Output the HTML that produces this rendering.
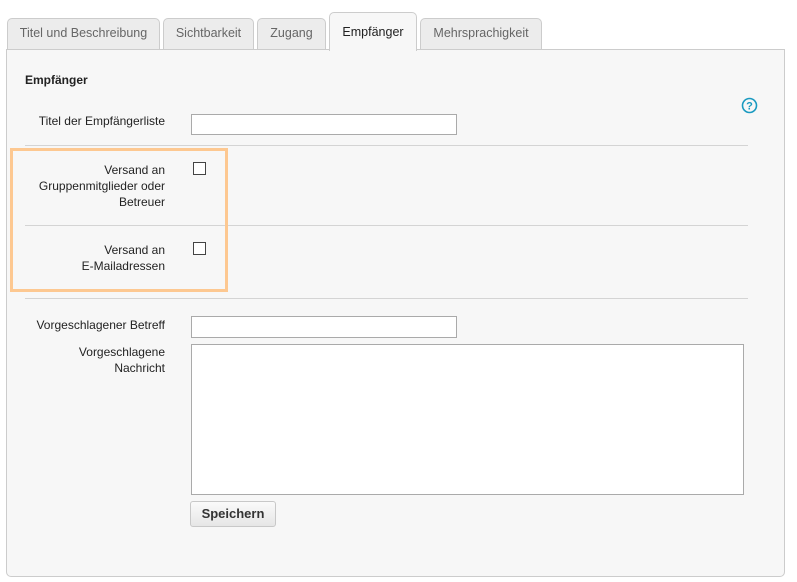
<!DOCTYPE html>
<html><head><meta charset="utf-8"><style>
body{margin:0;width:797px;height:582px;background:#fff;font-family:"Liberation Sans",Arial,sans-serif;font-size:12px;color:#222;position:relative;overflow:hidden}
.a{position:absolute}
.tab{position:absolute;top:18px;height:31px;background:#ececec;border:1px solid #ccc;border-bottom:none;border-radius:5px 5px 0 0;color:#666;font-size:12.5px;text-align:center;line-height:28px;box-sizing:border-box}
.panel{position:absolute;left:6px;top:49px;width:779px;height:528px;background:#f7f7f7;border:1px solid #ccc;border-radius:0 0 5px 5px;box-sizing:border-box}
.lbl{position:absolute;text-align:right;width:160px;left:5px;line-height:16px}
.hr{position:absolute;left:25px;width:723px;height:1px;background:#d4d4d4}
.in{position:absolute;background:#fff;border:1px solid #aaa;box-sizing:border-box}
.cb{position:absolute;width:13px;height:13px;border:1px solid #444;background:#fff;box-sizing:border-box}
</style></head><body>
<div class="tab" style="left:7px;width:153px">Titel und Beschreibung</div>
<div class="tab" style="left:163px;width:91px">Sichtbarkeit</div>
<div class="tab" style="left:257px;width:69px">Zugang</div>
<div class="tab" style="left:420px;width:122px">Mehrsprachigkeit</div>
<div class="panel"></div>
<div class="tab" style="left:329px;top:12px;width:88px;height:39px;background:#f7f7f7;color:#222;line-height:38px;z-index:2">Empfänger</div>
<div class="a" style="left:25px;top:73px;font-weight:bold">Empfänger</div>
<svg class="a" style="left:741px;top:97px" width="17" height="17" viewBox="0 0 17 17"><circle cx="8.5" cy="8.5" r="7" fill="none" stroke="#1a9ac0" stroke-width="1.6"/><text x="8.5" y="12.5" text-anchor="middle" font-family="Liberation Sans" font-weight="bold" font-size="11" fill="#1a9ac0">?</text></svg>
<div class="lbl" style="top:113px">Titel der Empfängerliste</div>
<div class="in" style="left:191px;top:114px;width:266px;height:21px"></div>
<div class="hr" style="top:145px"></div>
<div class="lbl" style="top:162px">Versand an<br>Gruppenmitglieder oder<br>Betreuer</div>
<div class="cb" style="left:193px;top:162px"></div>
<div class="hr" style="top:225px"></div>
<div class="lbl" style="top:242px">Versand an<br>E-Mailadressen</div>
<div class="cb" style="left:193px;top:242px"></div>
<div class="a" style="left:10px;top:148px;width:218px;height:144px;border:3px solid #fdc891;box-sizing:border-box"></div>
<div class="hr" style="top:298px"></div>
<div class="lbl" style="top:317px">Vorgeschlagener Betreff</div>
<div class="in" style="left:191px;top:316px;width:266px;height:22px"></div>
<div class="lbl" style="top:344px">Vorgeschlagene<br>Nachricht</div>
<div class="in" style="left:191px;top:344px;width:553px;height:151px"></div>
<div class="a" style="left:190px;top:501px;width:86px;height:26px;border:1px solid #c8c8c8;border-radius:3px;background:linear-gradient(#fafafa,#e6e6e6);box-sizing:border-box;text-align:center;line-height:24px;font-weight:bold;font-size:13px;color:#333">Speichern</div>
</body></html>
